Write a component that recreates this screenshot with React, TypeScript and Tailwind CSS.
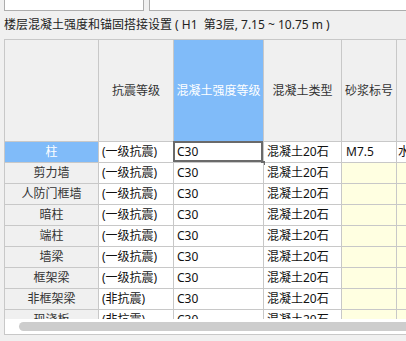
import React from 'react';

type Row = {
  name: string;
  seismic: string;
  grade: string;
  type: string;
  mortar?: string;
  mortarType?: string;
};

const rows: Row[] = [
  { name: '柱', seismic: '(一级抗震)', grade: 'C30', type: '混凝土20石', mortar: 'M7.5', mortarType: '水泥砂浆' },
  { name: '剪力墙', seismic: '(一级抗震)', grade: 'C30', type: '混凝土20石' },
  { name: '人防门框墙', seismic: '(一级抗震)', grade: 'C30', type: '混凝土20石' },
  { name: '暗柱', seismic: '(一级抗震)', grade: 'C30', type: '混凝土20石' },
  { name: '端柱', seismic: '(一级抗震)', grade: 'C30', type: '混凝土20石' },
  { name: '墙梁', seismic: '(一级抗震)', grade: 'C30', type: '混凝土20石' },
  { name: '框架梁', seismic: '(一级抗震)', grade: 'C30', type: '混凝土20石' },
  { name: '非框架梁', seismic: '(非抗震)', grade: 'C30', type: '混凝土20石' },
  { name: '现浇板', seismic: '(非抗震)', grade: 'C30', type: '混凝土20石' },
];

const HeaderRow: React.FC = () => (
  <div className="flex h-[102px] shrink-0">
    <div className="w-[94px] shrink-0 border-r border-b border-[#c8c8c8] bg-[#f0f0f0]" />
    <div className="w-[75px] shrink-0 flex items-center justify-center border-r border-b border-[#c8c8c8] bg-[#f0f0f0] text-[#333]">
      抗震等级
    </div>
    <div className="w-[90px] shrink-0 flex items-center justify-center border-r border-b border-[#c8c8c8] bg-[#80bbf9] text-white">
      混凝土强度等级
    </div>
    <div className="w-[78px] shrink-0 flex items-center justify-center border-r border-b border-[#c8c8c8] bg-[#f0f0f0] text-[#333]">
      混凝土类型
    </div>
    <div className="w-[55px] shrink-0 flex items-center justify-center border-r border-b border-[#c8c8c8] bg-[#f0f0f0] text-[#333]">
      砂浆标号
    </div>
    <div className="w-[140px] shrink-0 border-r border-b border-[#c8c8c8] bg-[#f0f0f0]" />
  </div>
);

const DataRow: React.FC<{ row: Row; active?: boolean }> = ({ row, active }) => {
  const fill = active ? 'bg-white' : 'bg-[#ffffe1]';
  return (
    <div className="flex h-[21px] shrink-0">
      <div
        className={
          active
            ? 'w-[94px] shrink-0 flex items-center justify-center border-r border-b border-[#c8c8c8] bg-[#80bbf9] text-white'
            : 'w-[94px] shrink-0 flex items-center justify-center border-r border-b border-[#c8c8c8] bg-[#f0f0f0] text-[#333]'
        }
      >
        {row.name}
      </div>
      <div className="w-[75px] shrink-0 flex items-center px-[3px] border-r border-b border-[#c8c8c8] bg-white text-[#111]">
        {row.seismic}
      </div>
      <div className="relative w-[90px] shrink-0 flex items-center px-[3px] border-r border-b border-[#c8c8c8] bg-white text-[#111]">
        {row.grade}
        {active && (
          <>
            <div className="absolute -left-[1px] -top-[1px] right-0 bottom-0 border-2 border-[#6a6a6a]" />
            <div className="absolute -right-[2px] -bottom-[3px] w-[4px] h-[4px] bg-[#6a6a6a]" />
          </>
        )}
      </div>
      <div className="w-[78px] shrink-0 flex items-center px-[3px] border-r border-b border-[#c8c8c8] bg-white text-[#111]">
        {row.type}
      </div>
      <div className={`w-[55px] shrink-0 flex items-center px-[4px] border-r border-b border-[#c8c8c8] ${fill} text-[#111]`}>
        {row.mortar}
      </div>
      <div className={`w-[140px] shrink-0 flex items-center px-[1px] border-r border-b border-[#c8c8c8] ${fill} text-[#111] whitespace-nowrap`}>
        {row.mortarType}
      </div>
    </div>
  );
};

export default function App() {
  return (
    <div className="w-[406px] h-[341px] overflow-hidden bg-[#f0f0f0] flex flex-col text-[12px] leading-[20px] font-['Noto_Sans','Noto_Sans_CJK_SC',sans-serif]">
      <div className="flex h-[11px] shrink-0">
        <div className="ml-[4px] w-[140px] h-full bg-white border border-t-0 border-[#adadad]" />
        <div className="ml-[5px] flex-1 h-full bg-white border border-t-0 border-r-0 border-[#adadad]" />
      </div>

      <div className="h-[28px] shrink-0 flex items-center pl-[4px] text-[#222] whitespace-pre">
        楼层混凝土强度和锚固搭接设置 ( H1  第3层, 7.15 ~ 10.75 m )
      </div>

      <div className="ml-[4px] h-[296px] shrink-0 flex flex-col border-l border-t border-b border-[#c8c8c8] bg-white">
        <div className="h-[279px] shrink-0 overflow-hidden flex flex-col">
          <HeaderRow />
          {rows.map((row, i) => (
            <DataRow key={row.name} row={row} active={i === 0} />
          ))}
        </div>
        <div className="h-[15px] shrink-0 flex items-center pl-[14px] bg-white">
          <div className="h-[9px] w-full rounded-l-full bg-[#cdcdcd]" />
        </div>
      </div>
    </div>
  );
}
